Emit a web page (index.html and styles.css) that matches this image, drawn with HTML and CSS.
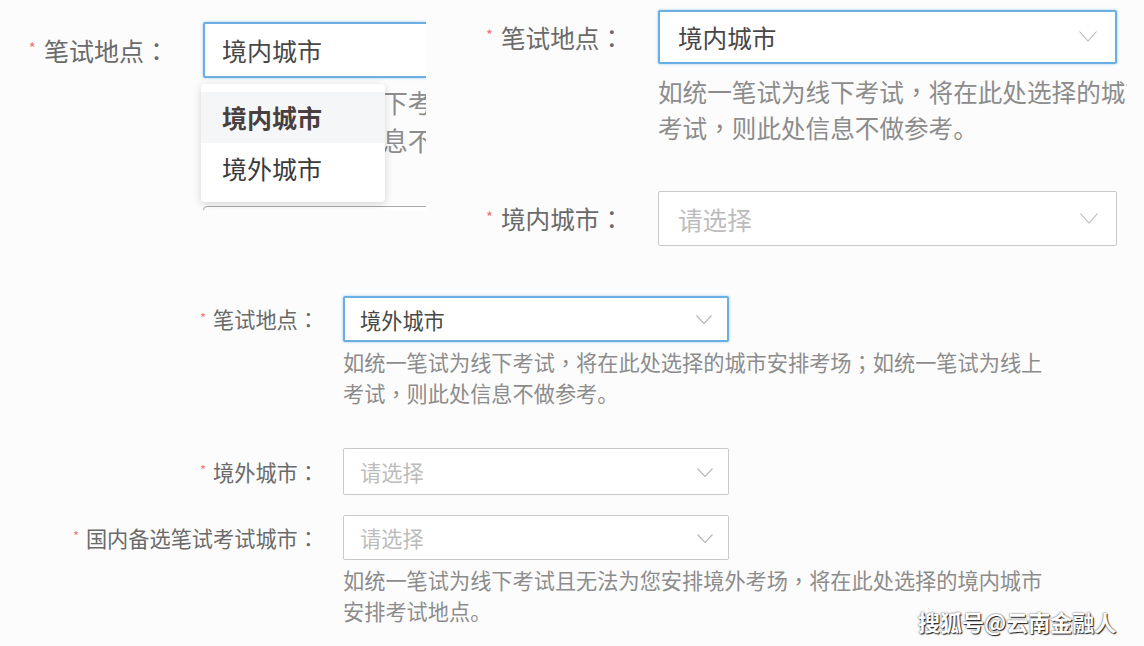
FILE: index.html
```html
<!DOCTYPE html>
<html lang="zh-CN">
<head>
<meta charset="utf-8">
<title>笔试地点</title>
<link rel="stylesheet" href="styles.css">
</head>
<body>
<div class="page">
  <div class="top">
    <section class="panel pa">
      <div class="form">
        <div class="lbl"><span class="req">*</span>笔试地点<span class="p" lang="zh-TW">：</span></div>
        <div class="sel focus"><span class="val">境内城市</span></div>
        <div class="help">如统一笔试为线下考试<span class="p" lang="zh-TW">，</span>将在此处选择的城市安排考场<span class="p" lang="zh-TW">；</span>如统一笔试为线上<br>考试<span class="p" lang="zh-TW">，</span>则此处信息不做参考。</div>
        <div class="sel next"></div>
      </div>
      <div class="menu">
        <div class="opt on">境内城市</div>
        <div class="opt">境外城市</div>
      </div>
    </section>

    <section class="panel pb">
      <div class="form">
        <div class="lbl"><span class="req">*</span>笔试地点<span class="p" lang="zh-TW">：</span></div>
        <div class="sel focus"><span class="val">境内城市</span><svg class="chev" viewBox="0 0 18 11"><polyline points="0.5,0.5 9,10 17.5,0.5"/></svg></div>
        <div class="help">如统一笔试为线下考试<span class="p" lang="zh-TW">，</span>将在此处选择的城市安排考场<span class="p" lang="zh-TW">；</span>如统一笔试为线上<br>考试<span class="p" lang="zh-TW">，</span>则此处信息不做参考。</div>
        <div class="lbl r2"><span class="req">*</span>境内城市<span class="p" lang="zh-TW">：</span></div>
        <div class="sel r2"><span class="ph">请选择</span><svg class="chev" viewBox="0 0 18 11"><polyline points="0.5,0.5 9,10 17.5,0.5"/></svg></div>
      </div>
    </section>
  </div>

  <section class="panel pc">
    <div class="form">
      <div class="lbl"><span class="req">*</span>笔试地点<span class="p" lang="zh-TW">：</span></div>
      <div class="sel focus"><span class="val">境外城市</span><svg class="chev" viewBox="0 0 16 9"><polyline points="0.5,0.5 8,8.5 15.5,0.5"/></svg></div>
      <div class="help">如统一笔试为线下考试<span class="p" lang="zh-TW">，</span>将在此处选择的城市安排考场<span class="p" lang="zh-TW">；</span>如统一笔试为线上<br>考试<span class="p" lang="zh-TW">，</span>则此处信息不做参考。</div>
      <div class="lbl r2"><span class="req">*</span>境外城市<span class="p" lang="zh-TW">：</span></div>
      <div class="sel r2"><span class="ph">请选择</span><svg class="chev" viewBox="0 0 16 9"><polyline points="0.5,0.5 8,8.5 15.5,0.5"/></svg></div>
      <div class="lbl r3"><span class="req">*</span>国内备选笔试考试城市<span class="p" lang="zh-TW">：</span></div>
      <div class="sel r3"><span class="ph">请选择</span><svg class="chev" viewBox="0 0 16 9"><polyline points="0.5,0.5 8,8.5 15.5,0.5"/></svg></div>
      <div class="help">如统一笔试为线下考试且无法为您安排境外考场<span class="p" lang="zh-TW">，</span>将在此处选择的境内城市<br>安排考试地点。</div>
    </div>
  </section>

  <div class="mark">搜狐号@云南金融人</div>
</div>
</body>
</html>
```

FILE: styles.css
```css
* { box-sizing: border-box; }

html, body {
  margin: 0;
  padding: 0;
  background: #fcfcfc;
}

.page {
  position: relative;
  width: 1144px;
  height: 646px;
  overflow: hidden;
  font-family: "Noto Sans CJK SC", "Noto Sans", sans-serif;
  color: #666;
  background: #fcfcfc;
}

.top {
  display: flex;
  height: 270px;
}

.panel {
  position: relative;
  overflow: hidden;
}

.form {
  display: grid;
  align-items: center;
}

.lbl {
  grid-column: 1;
  text-align: right;
  white-space: nowrap;
  color: #6a6a6a;
  line-height: 1;
}

/* centred full-width punctuation, as in the reference */
.p {
  font-family: "Noto Sans CJK TC", "Noto Sans CJK SC", sans-serif;
}

.req {
  color: #ef7373;
  font-size: 0.6em;
  vertical-align: 0.45em;
  margin-right: 0.55em;
}

.sel {
  grid-column: 2;
  position: relative;
  display: flex;
  align-items: center;
  background: #fff;
  border: 1px solid #c9c9c9;
  border-radius: 2px;
}

.sel.focus {
  border: 2px solid #6aafe2;
  box-shadow: 0 0 3px rgba(90, 160, 220, 0.55);
}

.val { color: #474747; }
.ph { color: #bcbcbc; }

.chev {
  position: absolute;
  fill: none;
  stroke: #b5b5b5;
  stroke-width: 1.1;
}

.help {
  grid-column: 2;
  white-space: nowrap;
  color: #8c8c8c;
}

/* ---------- Panel A (dropdown open) ---------- */
.pa {
  flex: none;
  width: 426px;
  height: 210px;
  padding-top: 22px;
  font-size: 25px;
}

.pa .form {
  grid-template-columns: 203px minmax(0, 1fr);
}

.pa .lbl { padding-right: 34px; }

.pa .sel {
  width: 460px;
  height: 56px;
  padding-left: 17px;
}

.pa .help {
  margin-top: 5px;
  line-height: 38px;
  font-size: 25.6px;
}

.pa .sel.next {
  margin-top: 47px;
  height: 50px;
  border-color: #a9a9a9;
  border-radius: 4px;
}

.menu {
  position: absolute;
  left: 201px;
  top: 84px;
  width: 184px;
  padding: 8px 0;
  background: #fff;
  border-radius: 4px;
  box-shadow: 0 2px 8px rgba(0, 0, 0, 0.16);
}

.opt {
  height: 51px;
  line-height: 51px;
  padding-left: 21px;
  font-size: 25px;
  color: #3a3a3a;
}

.opt.on {
  background: #f5f6f7;
  font-weight: 700;
  color: #4a3f40;
}

/* ---------- Panel B ---------- */
.pb {
  flex: none;
  width: 701px;
  height: 270px;
  padding-top: 10px;
  font-size: 24.6px;
}

.pb .form {
  grid-template-columns: 232px minmax(0, 1fr);
}

.pb .lbl { padding-right: 34px; }

.pb .sel {
  width: 459px;
  height: 54px;
  padding-left: 18px;
}

.pb .sel.r2 {
  height: 55px;
  padding-left: 19px;
}

.pb .chev {
  width: 18px;
  height: 11px;
  right: 18px;
  top: 50%;
  margin-top: -6px;
}

.pb .help {
  margin-top: 9px;
  line-height: 36px;
}

.pb .r2 { margin-top: 46px; }

/* ---------- Panel C ---------- */
.pc {
  height: 376px;
  padding-top: 26px;
  font-size: 21.2px;
}

.pc .form {
  grid-template-columns: 343px minmax(0, 1fr);
}

.pc .lbl { padding-right: 24px; }

.pc .sel {
  width: 386px;
  height: 46px;
  padding-left: 16px;
}

.pc .sel.focus { padding-left: 15px; }

.pc .chev {
  width: 16px;
  height: 9px;
  right: 15px;
  top: 50%;
  margin-top: -4px;
}

.pc .help {
  margin-top: 4px;
  line-height: 31px;
}

.pc .r2 { margin-top: 40px; }
.pc .sel.r2 { height: 47px; }
.pc .r3 { margin-top: 20px; }
.pc .sel.r3 { height: 45px; }

/* ---------- Watermark ---------- */
.mark {
  position: absolute;
  left: 918px;
  top: 605px;
  font-size: 22px;
  line-height: 32px;
  color: #fff;
  font-weight: 600;
  text-shadow: 1px 1px 1px #222, 0 0 2px #444;
  white-space: nowrap;
}
```
